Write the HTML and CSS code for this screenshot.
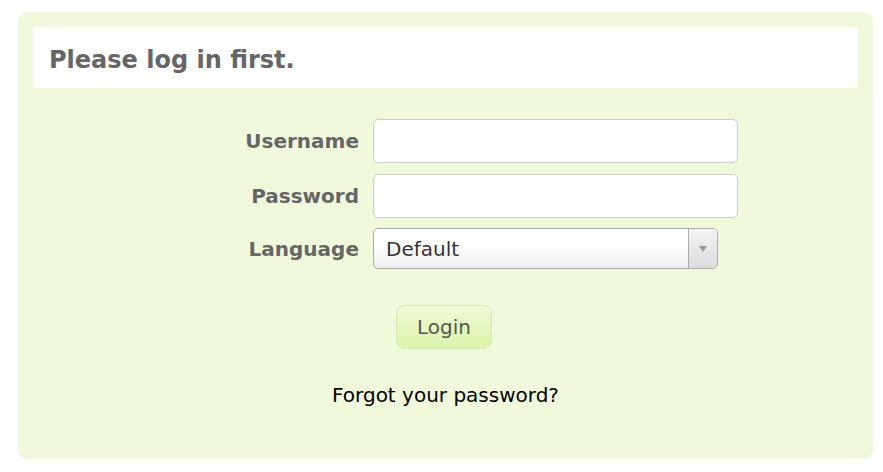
FILE: index.html
```html
<!DOCTYPE html>
<html>
<head>
<meta charset="utf-8">
<link rel="stylesheet" href="styles.css">
</head>
<body>
<div class="panel">
  <div class="header"><h1 class="title">Please log in first.</h1></div>
  <form class="form">
    <label class="label" for="u">Username</label>
    <input class="input" id="u" type="text">
    <label class="label" for="p">Password</label>
    <input class="input" id="p" type="password">
    <label class="label">Language</label>
    <div class="select">
      <span class="select-text">Default</span>
      <span class="select-arrow"><span class="tri"></span></span>
    </div>
  </form>
  <div class="actions"><button class="btn" type="button">Login</button></div>
  <div class="forgot">Forgot your password?</div>
</div>
</body>
</html>
```
FILE: styles.css
```css
html, body { margin: 0; padding: 0; background: #fff; }
body { padding: 12px 10px 0 18px; font-family: "DejaVu Sans", Verdana, sans-serif; }
.panel {
  width: 855px;
  height: 447px;
  box-sizing: border-box;
  background: #f0f9dc;
  border-radius: 9px;
  padding: 15px;
}
.header {
  background: #fff;
  height: 61px;
  display: flex;
  align-items: center;
  padding-left: 16px;
}
.title {
  margin: 4px 0 0 0;
  font-size: 24px;
  font-weight: bold;
  color: #666;
}
.form {
  display: grid;
  grid-template-columns: 201px 365px;
  column-gap: 14px;
  row-gap: 11px;
  margin: 31px 0 0 125px;
  align-items: center;
}
.label {
  text-align: right;
  font-size: 20px;
  font-weight: bold;
  color: #666;
}
.input {
  height: 44px;
  box-sizing: border-box;
  border: 1px solid #ccc;
  border-radius: 5px;
  background: #fff;
  margin: 0;
  font: inherit;
}
.select {
  width: 345px;
  height: 41px;
  margin-top: -1px;
  box-sizing: border-box;
  border: 1px solid #aaa;
  border-radius: 5px;
  background: linear-gradient(#fff 40%, #eee);
  display: flex;
  align-items: center;
  overflow: hidden;
}
.select-text {
  flex: 1;
  padding-left: 12px;
  font-size: 20px;
  color: #333;
}
.select-arrow {
  width: 28px;
  height: 100%;
  border-left: 1px solid #aaa;
  background: linear-gradient(#f4f4f4, #dcdcdc);
  display: flex;
  align-items: center;
  justify-content: center;
}
.tri {
  width: 0; height: 0;
  border-left: 4px solid transparent;
  border-right: 4px solid transparent;
  border-top: 6px solid #999;
}
.actions {
  display: flex;
  justify-content: center;
  margin-top: 36px;
}
.btn {
  width: 96px;
  height: 44px;
  border: 1px solid #d6eab8;
  border-radius: 8px;
  background: linear-gradient(#f0fad6, #dcf3a8);
  font-family: inherit;
  font-size: 20px;
  color: #555;
  margin-left: -3px;
  padding: 0;
}
.forgot {
  text-align: center;
  margin-top: 34px;
  font-size: 20px;
  color: #000;
}
```
